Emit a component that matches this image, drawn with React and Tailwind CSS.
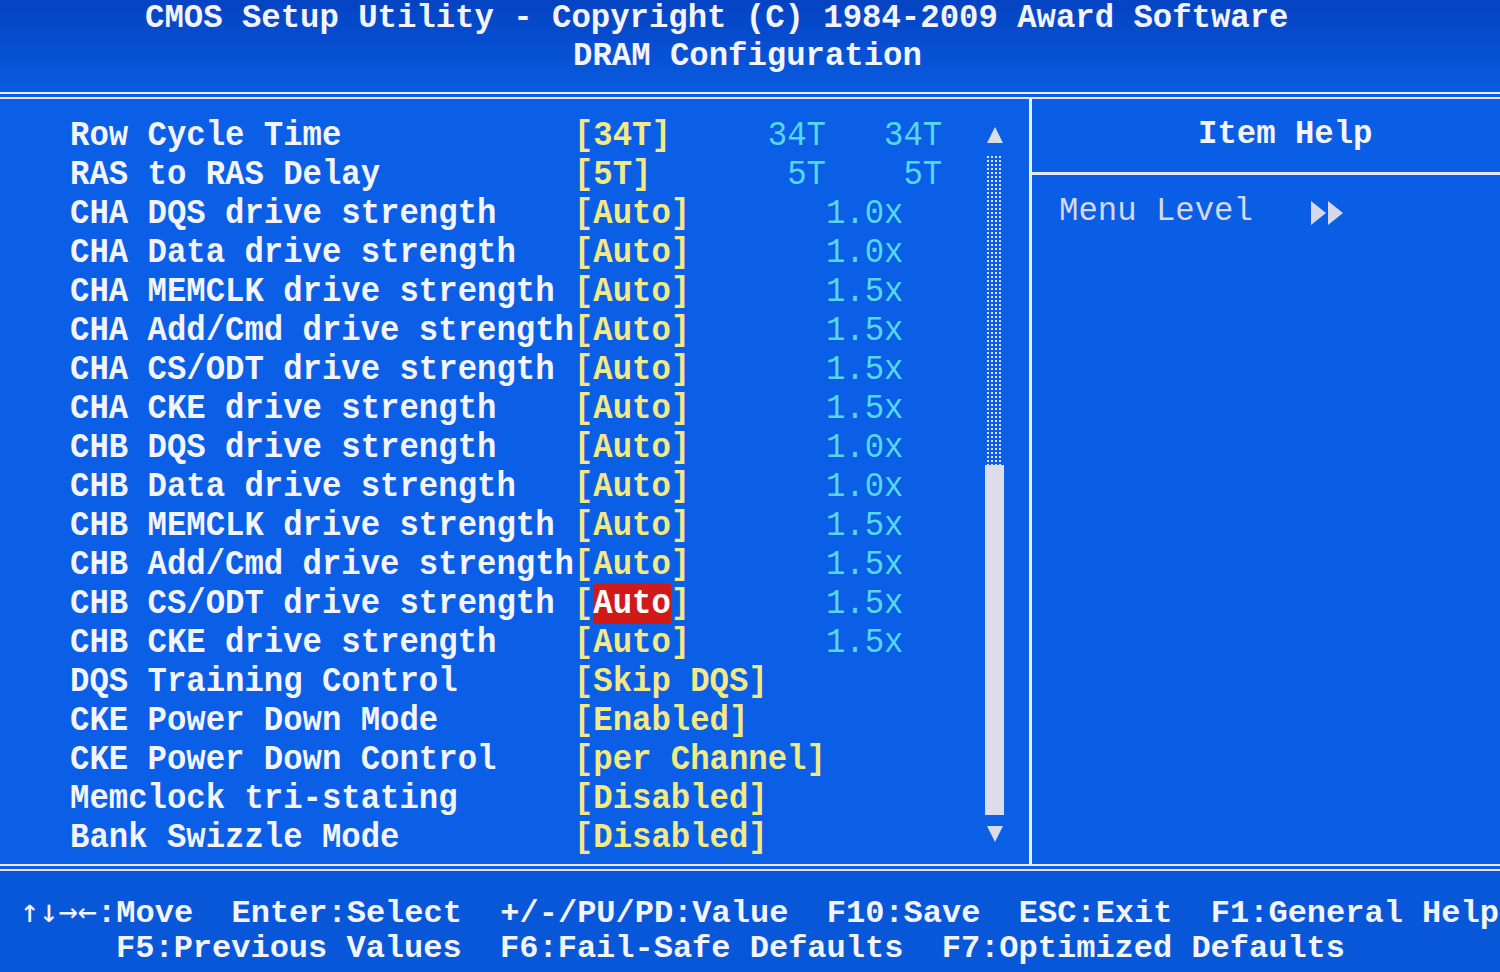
import React from "react";

const rows = [
  ["Row Cycle Time", "[34T]", "34T   34T"],
  ["RAS to RAS Delay", "[5T]", " 5T    5T"],
  ["CHA DQS drive strength", "[Auto]", "   1.0x"],
  ["CHA Data drive strength", "[Auto]", "   1.0x"],
  ["CHA MEMCLK drive strength", "[Auto]", "   1.5x"],
  ["CHA Add/Cmd drive strength", "[Auto]", "   1.5x"],
  ["CHA CS/ODT drive strength", "[Auto]", "   1.5x"],
  ["CHA CKE drive strength", "[Auto]", "   1.5x"],
  ["CHB DQS drive strength", "[Auto]", "   1.0x"],
  ["CHB Data drive strength", "[Auto]", "   1.0x"],
  ["CHB MEMCLK drive strength", "[Auto]", "   1.5x"],
  ["CHB Add/Cmd drive strength", "[Auto]", "   1.5x"],
  ["CHB CS/ODT drive strength", "[Auto]", "   1.5x", true],
  ["CHB CKE drive strength", "[Auto]", "   1.5x"],
  ["DQS Training Control", "[Skip DQS]", ""],
  ["CKE Power Down Mode", "[Enabled]", ""],
  ["CKE Power Down Control", "[per Channel]", ""],
  ["Memclock tri-stating", "[Disabled]", ""],
  ["Bank Swizzle Mode", "[Disabled]", ""],
];

const SettingRow = ({ label, value, extra, selected }) => (
  <div className="h-[39px] leading-[39px] whitespace-pre scale-y-[1.06]">
    <span className="text-[#f4f4ff] font-bold">{label.padEnd(26, " ")}</span>
    {selected ? (
      <span className="text-[#f2ea84] font-bold">
        [<span className="bg-[#d01a1a] text-white">Auto</span>]
      </span>
    ) : (
      <span className="text-[#f2ea84] font-bold">{value.padEnd(10, " ")}</span>
    )}
    {selected && <span>{"    "}</span>}
    <span className="text-[#55d8ea] font-normal">{extra}</span>
  </div>
);

const Triangle = ({ up }) => (
  <svg width="16" height="16" viewBox="0 0 16 16">
    <polygon
      points={up ? "8,0 16,16 0,16" : "0,0 16,0 8,16"}
      fill="#dcdce6"
    />
  </svg>
);

export default function App() {
  return (
    <div className="w-[1500px] h-[972px] overflow-hidden bg-[#0a5ee5] font-['Liberation_Mono','DejaVu_Sans_Mono',monospace] text-[32.3px]">
      {/* header */}
      <div className="h-[92px] bg-gradient-to-b from-[#0443c2] to-[#0a5bdf] text-[#f4f4ff] font-bold">
        <div className="h-[38px] leading-[38px] pl-[145px] whitespace-pre">
          CMOS Setup Utility - Copyright (C) 1984-2009 Award Software
        </div>
        <div className="h-[38px] leading-[38px] pl-[573px] whitespace-pre">
          DRAM Configuration
        </div>
      </div>

      <div className="h-[7px] border-y-2 border-[#e6e8ff]" />

      {/* main */}
      <div className="h-[765px] flex">
        <div className="w-[1032px] flex border-r-[3px] border-[#eceeff] bg-[#0a5fe6]">
          <div className="flex-1 pl-[70px] pt-[17px]">
            {rows.map(([label, value, extra, selected]) => (
              <SettingRow
                key={label}
                label={label}
                value={value}
                extra={extra}
                selected={selected}
              />
            ))}
          </div>
          <div className="w-[19px] mr-[25px] pt-[28px] flex flex-col items-center">
            <Triangle up />
            <div className="mt-[12px] h-[310px] w-[17px] bg-[radial-gradient(circle,#dfe6ff_1px,transparent_1.3px)] bg-[length:4px_4px]" />
            <div className="h-[350px] w-[19px] bg-[#dcdde8]" />
            <div className="mt-[11px]">
              <Triangle />
            </div>
          </div>
        </div>

        <div className="flex-1 flex flex-col bg-[#0a5ee5]">
          <div className="h-[73px] flex items-center pl-[166px] text-[#f4f4ff] font-bold">
            <span>Item Help</span>
          </div>
          <div className="h-[3px] bg-[#e6e8ff]" />
          <div className="pt-[18px] pl-[27px] flex items-center h-[57px] text-[#d6d8ec]">
            <span className="whitespace-pre">Menu Level   </span>
            <svg width="34" height="24" viewBox="0 0 34 24">
              <polygon points="0,0 15,12 0,24" fill="#d6d8ec" />
              <polygon points="17,0 32,12 17,24" fill="#d6d8ec" />
            </svg>
          </div>
        </div>
      </div>

      <div className="h-[7px] border-y-2 border-[#e6e8ff]" />

      {/* footer */}
      <div className="h-[101px] pt-[22px] pl-[20px] bg-[#0957d9] text-[#f4f4ff] font-bold text-[32px]">
        <div className="h-[37px] leading-[37px] whitespace-pre">
          <span className="font-['DejaVu_Sans_Mono',monospace] font-normal">↑↓→←</span>
          {":Move  Enter:Select  +/-/PU/PD:Value  F10:Save  ESC:Exit  F1:General Help"}
        </div>
        <div className="h-[37px] leading-[37px] whitespace-pre">
          {"     F5:Previous Values  F6:Fail-Safe Defaults  F7:Optimized Defaults"}
        </div>
      </div>
    </div>
  );
}
